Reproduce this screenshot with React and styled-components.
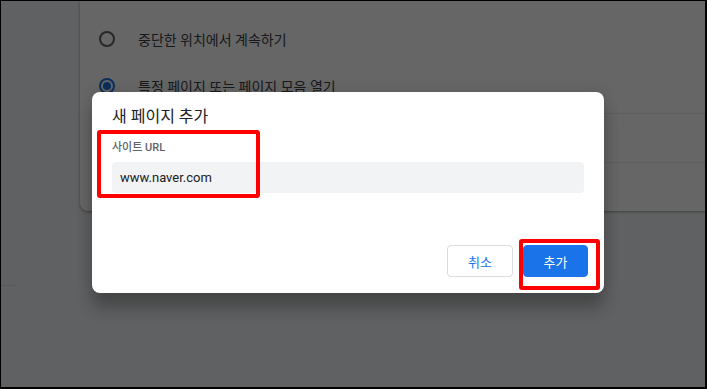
import React from "react";
import styled, { createGlobalStyle } from "styled-components";

const GlobalStyle = createGlobalStyle`
  html, body {
    margin: 0;
    padding: 0;
    background: #000;
  }
  body {
    font-family: Roboto, "Noto Sans CJK KR", sans-serif;
  }
`;

const Frame = styled.div`
  position: relative;
  width: 707px;
  height: 389px;
  box-sizing: border-box;
  border: 1px solid #000;
  border-right-width: 2px;
  border-bottom-width: 2px;
  overflow: hidden;
  background: #f1f3f4;
  display: flex;
`;

const SideNav = styled.div`
  width: 79px;
  flex-shrink: 0;
`;

const NavDivider = styled.div`
  margin-top: 284px;
  width: 14px;
  height: 1px;
  background: #dadce0;
`;

const Card = styled.div`
  flex: 1;
  height: 210px;
  margin-right: -12px;
  padding-top: 14px;
  box-sizing: border-box;
  background: #fff;
  border-bottom-left-radius: 8px;
  box-shadow: 0 1px 2px rgba(60, 64, 67, 0.3), 0 1px 3px 1px rgba(60, 64, 67, 0.15);
`;

const RadioRow = styled.div`
  height: 47px;
  display: flex;
  align-items: center;
  padding-left: 19px;
  gap: 23px;
  font-size: 14px;
  color: #3c4043;
`;

const Radio = styled.span`
  width: 16px;
  height: 16px;
  box-sizing: border-box;
  border-radius: 50%;
  border: 2px solid ${(p) => (p.checked ? "#1a73e8" : "#5f6368")};
  display: flex;
  align-items: center;
  justify-content: center;

  &::after {
    content: "";
    width: 8px;
    height: 8px;
    border-radius: 50%;
    background: ${(p) => (p.checked ? "#1a73e8" : "transparent")};
  }
`;

const Spacer = styled.div`
  height: 4px;
`;

const PageRow = styled.div`
  height: 49px;
  box-sizing: border-box;
  margin-left: 58px;
  border-top: 1px solid #e8eaed;
`;

const Overlay = styled.div`
  position: absolute;
  inset: 0;
  background: rgba(0, 0, 0, 0.6);
`;

const Dialog = styled.div`
  position: absolute;
  left: 91px;
  top: 91px;
  width: 512px;
  height: 201px;
  box-sizing: border-box;
  padding: 15px 16px 16px 20px;
  background: #fff;
  border-radius: 8px;
  box-shadow: 0 0 16px rgba(0, 0, 0, 0.12), 0 16px 16px rgba(0, 0, 0, 0.24);
  display: flex;
  flex-direction: column;
`;

const Title = styled.div`
  font-size: 16px;
  line-height: 20px;
  color: #202124;
`;

const FieldLabel = styled.div`
  margin-top: 14px;
  font-size: 11px;
  line-height: 14px;
  font-weight: 500;
  color: #5f6368;
`;

const UrlInput = styled.input`
  margin-top: 7px;
  width: 472px;
  height: 31px;
  box-sizing: border-box;
  padding: 0 8px;
  border: none;
  outline: none;
  border-radius: 4px;
  background: #f1f3f4;
  font-family: Roboto, "Noto Sans CJK KR", sans-serif;
  font-size: 13px;
  color: #202124;
`;

const ButtonRow = styled.div`
  margin-top: auto;
  display: flex;
  justify-content: flex-end;
  gap: 10px;
`;

const Button = styled.button`
  width: ${(p) => (p.primary ? "65px" : "66px")};
  height: 32px;
  box-sizing: border-box;
  border-radius: 4px;
  border: 1px solid ${(p) => (p.primary ? "#1a73e8" : "#dadce0")};
  background: ${(p) => (p.primary ? "#1a73e8" : "#fff")};
  color: ${(p) => (p.primary ? "#fff" : "#1a73e8")};
  font-family: Roboto, "Noto Sans CJK KR", sans-serif;
  font-size: 13px;
  font-weight: 400;
  padding: 0;
`;

const Highlight = styled.div`
  position: absolute;
  left: ${(p) => p.x}px;
  top: ${(p) => p.y}px;
  width: ${(p) => p.w}px;
  height: ${(p) => p.h}px;
  box-sizing: border-box;
  border: 4px solid #ff0000;
  border-radius: 3px;
`;

const App = () => {
  return (
    <>
      <GlobalStyle />
      <Frame>
        <SideNav>
          <NavDivider />
        </SideNav>
        <Card>
          <RadioRow>
            <Radio />
            중단한 위치에서 계속하기
          </RadioRow>
          <RadioRow>
            <Radio checked />
            특정 페이지 또는 페이지 모음 열기
          </RadioRow>
          <Spacer />
          <PageRow />
          <PageRow />
        </Card>
        <Overlay />
        <Dialog>
          <Title>새 페이지 추가</Title>
          <FieldLabel>사이트 URL</FieldLabel>
          <UrlInput defaultValue="www.naver.com" readOnly />
          <ButtonRow>
            <Button>취소</Button>
            <Button primary>추가</Button>
          </ButtonRow>
          <Highlight x={5} y={38} w={163} h={68} />
          <Highlight x={427} y={147} w={81} h={51} />
        </Dialog>
      </Frame>
    </>
  );
};

export default App;
